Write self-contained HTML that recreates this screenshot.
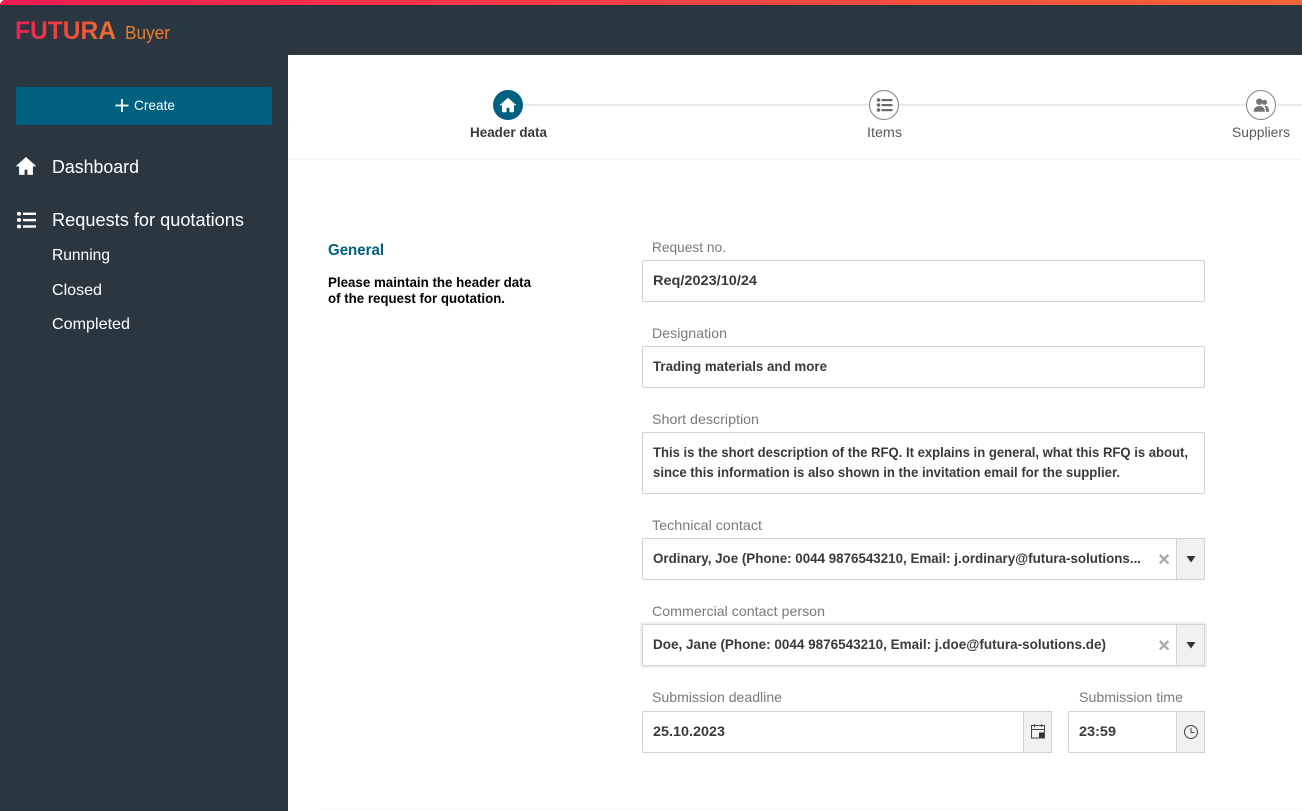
<!DOCTYPE html>
<html lang="en"><head><meta charset="utf-8"><title>FUTURA Buyer</title>
<style>
html,body{margin:0;padding:0;width:1302px;height:811px;overflow:hidden;background:#fff}
svg{display:block}
text{font-family:"Liberation Sans",Arial,sans-serif}
.w{fill:#fff}
.l{fill:#7a7a7a;font-size:14px}
.v{fill:#3a3a3a;font-size:14px;font-weight:bold}
.box{fill:#fff;stroke:#d2d2d2;stroke-width:1}
.btn{fill:#f1f1f1;stroke:#d2d2d2;stroke-width:1}
</style></head><body>
<svg width="1302" height="811" viewBox="0 0 1302 811" xmlns="http://www.w3.org/2000/svg">
<defs>
<linearGradient id="top" x1="0" x2="1"><stop offset="0" stop-color="#f01c52"/><stop offset="1" stop-color="#f46536"/></linearGradient>
<linearGradient id="logo" gradientUnits="userSpaceOnUse" x1="15" x2="125" y1="0" y2="0"><stop offset="0" stop-color="#f01c52"/><stop offset="1" stop-color="#ee7a2b"/></linearGradient>
</defs>
<rect width="1302" height="811" fill="#fff"/>
<rect x="0" y="0" width="1302" height="55" fill="#2a3640"/>
<rect x="0" y="0" width="288" height="811" fill="#2a3640"/>
<rect x="0" y="0" width="1302" height="5" fill="url(#top)"/>
<path d="M0 0h4Q1 1 0 4z" fill="#fff"/>
<rect x="288" y="159" width="1014" height="1" fill="#f5f5f5"/>
<rect x="320" y="809" width="982" height="1" fill="#f7f7f7"/>

<text x="15" y="39" font-size="25" font-weight="bold" fill="url(#logo)" textLength="101" lengthAdjust="spacingAndGlyphs">FUTURA</text>
<text x="125" y="39" font-size="18" fill="#ee7a2b" textLength="45" lengthAdjust="spacingAndGlyphs">Buyer</text>

<rect x="16" y="87" width="256" height="38" rx="1.5" fill="#00607f"/>
<path d="M122 99v13M115.500 105.500h13" stroke="#fff" stroke-width="1.800" fill="none"/>
<text class="w" x="134" y="110" font-size="14" textLength="41" lengthAdjust="spacingAndGlyphs">Create</text>

<path d="M26 157.500 16.500 166h3v8.500h4.700v-5.200h3.600v5.200h4.700V166h3z" fill="#fff" stroke="#fff" stroke-width=".8" stroke-linejoin="round"/>
<text class="w" x="52" y="173" font-size="18" textLength="87" lengthAdjust="spacingAndGlyphs">Dashboard</text>
<g fill="#fff"><rect x="17" y="212" width="4" height="3.500" rx="1"/><rect x="17" y="218.300" width="4" height="3.500" rx="1"/><rect x="17" y="224.700" width="4" height="3.500" rx="1"/><rect x="23" y="212.600" width="13" height="2.400"/><rect x="23" y="218.900" width="13" height="2.400"/><rect x="23" y="225.300" width="13" height="2.400"/></g>
<text class="w" x="52" y="226" font-size="18" textLength="192" lengthAdjust="spacingAndGlyphs">Requests for quotations</text>
<text class="w" x="52" y="260" font-size="16" textLength="58" lengthAdjust="spacingAndGlyphs">Running</text>
<text class="w" x="52" y="295" font-size="16" textLength="50" lengthAdjust="spacingAndGlyphs">Closed</text>
<text class="w" x="52" y="329" font-size="16" textLength="78" lengthAdjust="spacingAndGlyphs">Completed</text>

<rect x="508" y="104" width="794" height="2" fill="#eaeaea"/>
<circle cx="508" cy="105" r="15" fill="#00607f"/>
<path d="M508 98 500 105h2.300v7h4v-4.500h3.400v4.500h4v-7H516z" fill="#fff" stroke="#fff" stroke-width=".5" stroke-linejoin="round"/>
<text x="470" y="137" font-size="14" font-weight="bold" fill="#3a3a3a" textLength="77" lengthAdjust="spacingAndGlyphs">Header data</text>

<circle cx="884" cy="105" r="14.500" fill="#fff" stroke="#808080"/>
<g fill="#6a6a6a"><circle cx="878.500" cy="100" r="1.800"/><circle cx="878.500" cy="105" r="1.800"/><circle cx="878.500" cy="110" r="1.800"/><rect x="881.500" y="99" width="11" height="2.200"/><rect x="881.500" y="104" width="11" height="2.200"/><rect x="881.500" y="109" width="11" height="2.200"/></g>
<text x="867" y="137" font-size="14" fill="#5a5a5a" textLength="35" lengthAdjust="spacingAndGlyphs">Items</text>

<circle cx="1261" cy="105" r="14.500" fill="#fff" stroke="#808080"/>
<g fill="#757575"><circle cx="1259.300" cy="101.700" r="3.200"/><circle cx="1264.500" cy="102.300" r="2.600"/><path d="M1253.700 111.700c0-3.700 2.200-5.700 5.600-5.700s5.600 2 5.600 5.700z"/><path d="M1265.500 105.800c2.200.2 3.500 2.400 3.700 5.900h-3.300c0-2.400-.4-4.500-1.400-5.700z"/></g>
<text x="1232" y="137" font-size="14" fill="#5a5a5a" textLength="58" lengthAdjust="spacingAndGlyphs">Suppliers</text>

<text x="328" y="255" font-size="16" font-weight="bold" fill="#00607f" textLength="56" lengthAdjust="spacingAndGlyphs">General</text>
<text x="328" y="287" font-size="14" font-weight="bold" fill="#000" textLength="203" lengthAdjust="spacingAndGlyphs">Please maintain the header data</text>
<text x="328" y="303" font-size="14" font-weight="bold" fill="#000" textLength="177" lengthAdjust="spacingAndGlyphs">of the request for quotation.</text>

<text class="l" x="652" y="252" textLength="74" lengthAdjust="spacingAndGlyphs">Request no.</text>
<rect class="box" x="642.500" y="260.500" width="562" height="41" rx="1.500"/>
<text class="v" x="653" y="285" textLength="104" lengthAdjust="spacingAndGlyphs">Req/2023/10/24</text>

<text class="l" x="652" y="338" textLength="75" lengthAdjust="spacingAndGlyphs">Designation</text>
<rect class="box" x="642.500" y="346.500" width="562" height="41" rx="1.500"/>
<text class="v" x="653" y="371" textLength="174" lengthAdjust="spacingAndGlyphs">Trading materials and more</text>

<text class="l" x="652" y="424" textLength="107" lengthAdjust="spacingAndGlyphs">Short description</text>
<rect class="box" x="642.500" y="432.500" width="562" height="61" rx="1.500"/>
<text class="v" x="653" y="457" textLength="535" lengthAdjust="spacingAndGlyphs">This is the short description of the RFQ. It explains in general, what this RFQ is about,</text>
<text class="v" x="653" y="477" textLength="467" lengthAdjust="spacingAndGlyphs">since this information is also shown in the invitation email for the supplier.</text>

<text class="l" x="652" y="530" textLength="110" lengthAdjust="spacingAndGlyphs">Technical contact</text>
<rect class="box" x="642.500" y="538.500" width="562" height="41" rx="1.500"/>
<rect class="btn" x="1176.500" y="538.500" width="28" height="41"/>
<text class="v" x="653" y="563" textLength="488" lengthAdjust="spacingAndGlyphs">Ordinary, Joe (Phone: 0044 9876543210, Email: j.ordinary@futura-solutions...</text>
<path d="M1159.800 554.800l8.600 8.600M1168.400 554.800l-8.600 8.600" stroke="#a8a8a8" stroke-width="2.300" fill="none"/>
<path d="M1186.500 556h9l-4.500 6.500z" fill="#333"/>

<text class="l" x="652" y="616" textLength="173" lengthAdjust="spacingAndGlyphs">Commercial contact person</text>
<rect x="640" y="622" width="567" height="46" rx="3" fill="#efefef"/>
<rect class="box" x="642.500" y="624.500" width="562" height="41" rx="1.500"/>
<rect class="btn" x="1176.500" y="624.500" width="28" height="41"/>
<text class="v" x="653" y="649" textLength="453" lengthAdjust="spacingAndGlyphs">Doe, Jane (Phone: 0044 9876543210, Email: j.doe@futura-solutions.de)</text>
<path d="M1159.800 641l8.600 8.600M1168.400 641l-8.600 8.600" stroke="#a8a8a8" stroke-width="2.300" fill="none"/>
<path d="M1186.500 642h9l-4.500 6.500z" fill="#333"/>

<text class="l" x="652" y="702" textLength="130" lengthAdjust="spacingAndGlyphs">Submission deadline</text>
<rect class="box" x="642.500" y="711.500" width="409" height="41" rx="1.500"/>
<rect class="btn" x="1023.500" y="711.500" width="28" height="41"/>
<text class="v" x="653" y="736" textLength="72" lengthAdjust="spacingAndGlyphs">25.10.2023</text>
<g fill="none" stroke="#444" stroke-width="1"><rect x="1031.500" y="725.500" width="13" height="12.500"/><path d="M1031.500 729.500h13M1034.500 724v3M1041.500 724v3"/></g>
<rect x="1039" y="732.500" width="5" height="5" fill="#333"/>

<text class="l" x="1079" y="702" textLength="104" lengthAdjust="spacingAndGlyphs">Submission time</text>
<rect class="box" x="1068.500" y="711.500" width="136" height="41" rx="1.500"/>
<rect class="btn" x="1176.500" y="711.500" width="28" height="41"/>
<text class="v" x="1079" y="736" textLength="37" lengthAdjust="spacingAndGlyphs">23:59</text>
<circle cx="1191" cy="732" r="6.500" fill="none" stroke="#444"/>
<path d="M1191 728v4.500h3.500" fill="none" stroke="#444"/>
</svg>
</body></html>
